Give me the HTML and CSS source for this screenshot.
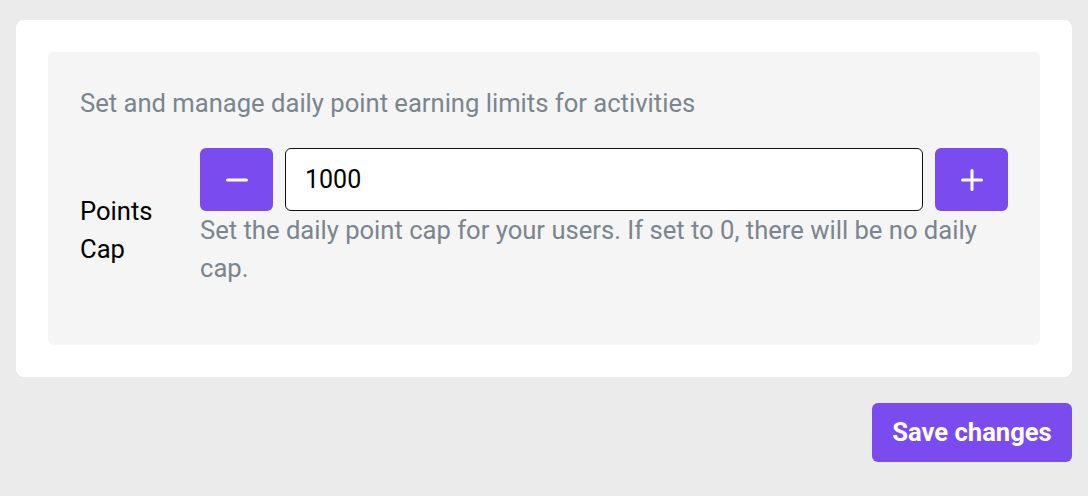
FILE: index.html
```html
<!DOCTYPE html>
<html>
<head>
<meta charset="utf-8">
<link rel="stylesheet" href="styles.css">
</head>
<body>
<div class="page">
  <div class="card">
    <div class="panel">
      <p class="intro">Set and manage daily point earning limits for activities</p>
      <div class="row">
        <div class="label">Points Cap</div>
        <div class="field">
          <div class="controls">
            <button class="step" aria-label="decrease">
              <svg width="22" height="22" viewBox="0 0 22 22"><path d="M1.5 11h19" stroke="#fff" stroke-width="3" stroke-linecap="round"/></svg>
            </button>
            <div class="input">1000</div>
            <button class="step" aria-label="increase">
              <svg width="22" height="22" viewBox="0 0 22 22"><path d="M1.5 11h19M11 1.5v19" stroke="#fff" stroke-width="3" stroke-linecap="round"/></svg>
            </button>
          </div>
          <p class="help">Set the daily point cap for your users. If set to 0, there will be no daily cap.</p>
        </div>
      </div>
    </div>
  </div>
  <div class="actions">
    <button class="save">Save changes</button>
  </div>
</div>
</body>
</html>
```

FILE: styles.css
```css
html, body {
  margin: 0;
  padding: 0;
  background: #ebebeb;
  font-family: Roboto, "Liberation Sans", Arial, sans-serif;
}
.page {
  padding: 20px 16px 0 16px;
}
.card {
  background: #fff;
  border-radius: 8px;
  padding: 32px;
}
.panel {
  background: #f5f5f5;
  border-radius: 6px;
  padding: 32px 32px 57px 32px;
}
.intro {
  margin: 0 0 25.6px 0;
  font-size: 25.6px;
  line-height: 38.4px;
  color: #7a8590;
}
.row {
  display: flex;
  align-items: flex-start;
}
.label {
  width: 120px;
  flex: none;
  margin-top: 44px;
  font-size: 25.6px;
  line-height: 38.4px;
  color: #000;
}
.field {
  flex: 1;
}
.controls {
  display: flex;
  gap: 12px;
}
.step {
  width: 73px;
  height: 63px;
  flex: none;
  border: none;
  border-radius: 6px;
  background: #7a4bee;
  display: flex;
  align-items: center;
  justify-content: center;
  padding: 0;
}
.input {
  flex: 1;
  height: 61px;
  box-sizing: content-box;
  border: 1px solid #111;
  border-radius: 6px;
  background: #fff;
  padding: 0 19px;
  display: flex;
  align-items: center;
  font-size: 25px;
  color: #000;
}
.help {
  margin: 0;
  font-size: 25.6px;
  line-height: 38.4px;
  color: #7a8590;
}
.actions {
  display: flex;
  justify-content: flex-end;
  margin-top: 26px;
}
.save {
  width: 200px;
  height: 59px;
  border: none;
  border-radius: 6px;
  background: #7a4bee;
  color: #fff;
  font-family: Roboto, "Liberation Sans", Arial, sans-serif;
  font-weight: 700;
  font-size: 25.6px;
  padding: 0;
}
```
